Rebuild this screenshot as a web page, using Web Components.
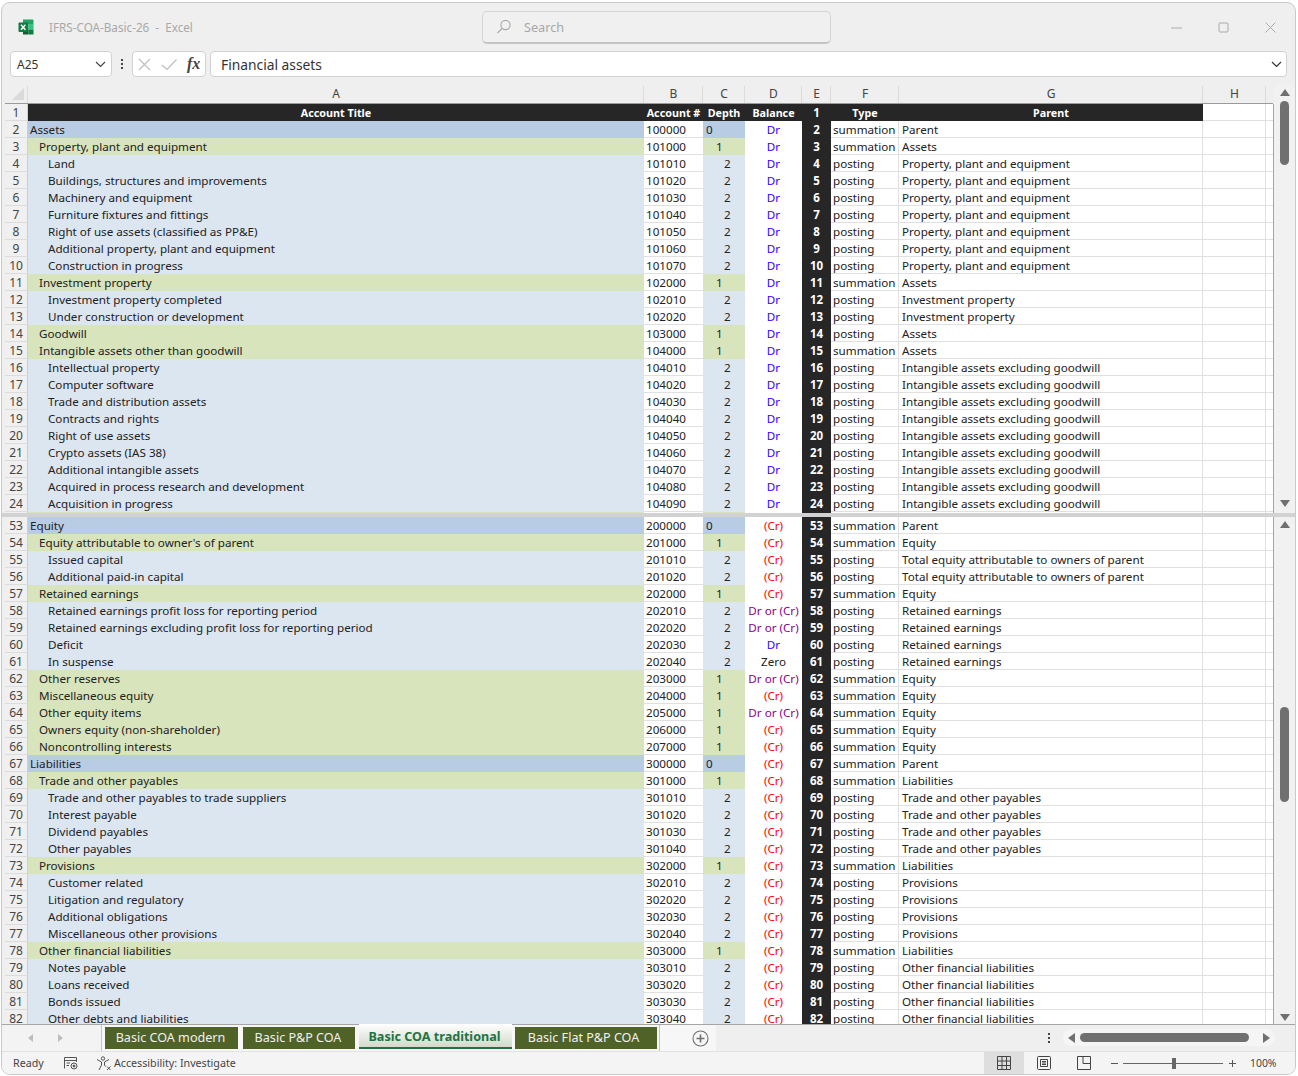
<!DOCTYPE html>
<html>
<head>
<meta charset="utf-8">
<title>IFRS-COA-Basic-26 - Excel</title>
<style>
  html, body { margin: 0; padding: 0; background: #fff; }
  body { font-family: "Noto Sans", "Open Sans", sans-serif; }
</style>
</head>
<body>
<xl-app>
  <xl-titlebar doc="IFRS-COA-Basic-26  -  Excel"></xl-titlebar>
  <xl-formula cell="A25">Financial assets</xl-formula>
  <xl-group pad-top="5" pad-bottom="6" offset="5" size="64">
    <xl-colheads></xl-colheads>
    <xl-pane style="height:409px" from="top"></xl-pane>
  </xl-group>
  <xl-split></xl-split>
  <xl-group pad-top="4" pad-bottom="3" offset="179" size="95">
    <xl-pane style="height:507px" from="bottom"></xl-pane>
  </xl-group>
  <xl-tabs></xl-tabs>
  <xl-status></xl-status>
</xl-app>

<script>
const COLS = '23px 616px 59px 42px 57px 29px 68px 304px 63px 7px';

const PPE = 'Property, plant and equipment';
const IP = 'Investment property';
const IA = 'Intangible assets excluding goodwill';
const TE = 'Total equity attributable to owners of parent';
const RE = 'Retained earnings';
const TP = 'Trade and other payables';
const OFL = 'Other financial liabilities';

// [row, title, account, balance, type, parent]
const topRows = [
  [2, 'Assets', 100000, 'Dr', 's', 'Parent'],
  [3, PPE, 101000, 'Dr', 's', 'Assets'],
  [4, 'Land', 101010, 'Dr', 'p', PPE],
  [5, 'Buildings, structures and improvements', 101020, 'Dr', 'p', PPE],
  [6, 'Machinery and equipment', 101030, 'Dr', 'p', PPE],
  [7, 'Furniture fixtures and fittings', 101040, 'Dr', 'p', PPE],
  [8, 'Right of use assets (classified as PP&E)', 101050, 'Dr', 'p', PPE],
  [9, 'Additional property, plant and equipment', 101060, 'Dr', 'p', PPE],
  [10, 'Construction in progress', 101070, 'Dr', 'p', PPE],
  [11, IP, 102000, 'Dr', 's', 'Assets'],
  [12, 'Investment property completed', 102010, 'Dr', 'p', IP],
  [13, 'Under construction or development', 102020, 'Dr', 'p', IP],
  [14, 'Goodwill', 103000, 'Dr', 'p', 'Assets'],
  [15, 'Intangible assets other than goodwill', 104000, 'Dr', 's', 'Assets'],
  [16, 'Intellectual property', 104010, 'Dr', 'p', IA],
  [17, 'Computer software', 104020, 'Dr', 'p', IA],
  [18, 'Trade and distribution assets', 104030, 'Dr', 'p', IA],
  [19, 'Contracts and rights', 104040, 'Dr', 'p', IA],
  [20, 'Right of use assets', 104050, 'Dr', 'p', IA],
  [21, 'Crypto assets (IAS 38)', 104060, 'Dr', 'p', IA],
  [22, 'Additional intangible assets', 104070, 'Dr', 'p', IA],
  [23, 'Acquired in process research and development', 104080, 'Dr', 'p', IA],
  [24, 'Acquisition in progress', 104090, 'Dr', 'p', IA],
];

const bottomRows = [
  [53, 'Equity', 200000, '(Cr)', 's', 'Parent'],
  [54, "Equity attributable to owner's of parent", 201000, '(Cr)', 's', 'Equity'],
  [55, 'Issued capital', 201010, '(Cr)', 'p', TE],
  [56, 'Additional paid-in capital', 201020, '(Cr)', 'p', TE],
  [57, RE, 202000, '(Cr)', 's', 'Equity'],
  [58, 'Retained earnings profit loss for reporting period', 202010, 'Dr or (Cr)', 'p', RE],
  [59, 'Retained earnings excluding profit loss for reporting period', 202020, 'Dr or (Cr)', 'p', RE],
  [60, 'Deficit', 202030, 'Dr', 'p', RE],
  [61, 'In suspense', 202040, 'Zero', 'p', RE],
  [62, 'Other reserves', 203000, 'Dr or (Cr)', 's', 'Equity'],
  [63, 'Miscellaneous equity', 204000, '(Cr)', 's', 'Equity'],
  [64, 'Other equity items', 205000, 'Dr or (Cr)', 's', 'Equity'],
  [65, 'Owners equity (non-shareholder)', 206000, '(Cr)', 's', 'Equity'],
  [66, 'Noncontrolling interests', 207000, '(Cr)', 's', 'Equity'],
  [67, 'Liabilities', 300000, '(Cr)', 's', 'Parent'],
  [68, TP, 301000, '(Cr)', 's', 'Liabilities'],
  [69, 'Trade and other payables to trade suppliers', 301010, '(Cr)', 'p', TP],
  [70, 'Interest payable', 301020, '(Cr)', 'p', TP],
  [71, 'Dividend payables', 301030, '(Cr)', 'p', TP],
  [72, 'Other payables', 301040, '(Cr)', 'p', TP],
  [73, 'Provisions', 302000, '(Cr)', 's', 'Liabilities'],
  [74, 'Customer related', 302010, '(Cr)', 'p', 'Provisions'],
  [75, 'Litigation and regulatory', 302020, '(Cr)', 'p', 'Provisions'],
  [76, 'Additional obligations', 302030, '(Cr)', 'p', 'Provisions'],
  [77, 'Miscellaneous other provisions', 302040, '(Cr)', 'p', 'Provisions'],
  [78, OFL, 303000, '(Cr)', 's', 'Liabilities'],
  [79, 'Notes payable', 303010, '(Cr)', 'p', OFL],
  [80, 'Loans received', 303020, '(Cr)', 'p', OFL],
  [81, 'Bonds issued', 303030, '(Cr)', 'p', OFL],
  [82, 'Other debts and liabilities', 303040, '(Cr)', 'p', OFL],
];

const levelOf = acct => acct % 100000 === 0 ? 0 : acct % 1000 === 0 ? 1 : 2;
const esc = s => String(s).replace(/&/g, '&amp;').replace(/</g, '&lt;');

class XlApp extends HTMLElement {
  connectedCallback() {
    this.attachShadow({ mode: 'open' });
    this.shadowRoot.innerHTML = `
      <style>
        :host {
          display: block;
          box-sizing: border-box;
          width: 1295px;
          height: 1073px;
          margin: 2px 0 0 1px;
          background: #efefef;
          border: 1px solid #c9c9c9;
          border-radius: 9px;
          overflow: hidden;
        }
        .col { display: flex; flex-direction: column; height: 100%; }
      </style>
      <div class="col"><slot></slot></div>
    `;
  }
}

class XlTitlebar extends HTMLElement {
  connectedCallback() {
    this.attachShadow({ mode: 'open' });
    this.shadowRoot.innerHTML = `
      <style>
        :host {
          display: flex;
          align-items: center;
          height: 48px;
          flex: none;
          padding: 0 0 0 16px;
          font-size: 11.7px;
          color: #a8a8a8;
        }
        .logo { width: 16px; height: 16px; flex: none; }
        .doc { margin-left: 15px; width: 433px; white-space: pre; }
        .search {
          box-sizing: border-box;
          width: 349px;
          height: 33px;
          display: flex;
          align-items: center;
          padding-left: 13px;
          gap: 12px;
          background: #f0f0f0;
          border: 1px solid #d4d4d4;
          border-bottom: 2px solid #c4c4c4;
          border-radius: 5px;
          font-size: 12.7px;
        }
        .btns { margin-left: auto; display: flex; align-items: center; gap: 36px; padding-right: 19px; }
        svg { display: block; }
      </style>
      <svg class="logo" viewBox="0 0 16 16">
        <path d="M5 0.5h9.5a1 1 0 0 1 1 1V5H5z" fill="#21a366"/>
        <rect x="5" y="5" width="5.2" height="5.5" fill="#107c41"/>
        <rect x="10.2" y="5" width="5.3" height="5.5" fill="#33c481"/>
        <rect x="5" y="10.5" width="5.2" height="5" fill="#185c37"/>
        <rect x="10.2" y="10.5" width="5.3" height="5" fill="#107c41"/>
        <rect x="0.5" y="3.5" width="9.5" height="9.5" rx="1" fill="#107c41"/>
        <path d="M3 5.7 L7.4 10.8 M7.4 5.7 L3 10.8" stroke="#fff" stroke-width="1.5"/>
      </svg>
      <span class="doc">${this.getAttribute('doc')}</span>
      <div class="search">
        <svg width="16" height="16" viewBox="0 0 16 16" fill="none" stroke="#a8a8a8" stroke-width="1.1">
          <circle cx="9.5" cy="6" r="4.6"/><path d="M6.2 9.3 L1.5 14"/>
        </svg>
        <span>Search</span>
      </div>
      <div class="btns">
        <svg width="11" height="11" viewBox="0 0 11 11"><path d="M0 6h11" stroke="#aaa"/></svg>
        <svg width="11" height="11" viewBox="0 0 11 11" fill="none"><rect x="1" y="1" width="9" height="9" rx="1" stroke="#aaa"/></svg>
        <svg width="11" height="11" viewBox="0 0 11 11"><path d="M0.5 0.5 L10.5 10.5 M10.5 0.5 L0.5 10.5" stroke="#aaa"/></svg>
      </div>
    `;
  }
}

class XlFormula extends HTMLElement {
  connectedCallback() {
    this.attachShadow({ mode: 'open' });
    this.shadowRoot.innerHTML = `
      <style>
        :host {
          display: flex;
          flex: none;
          height: 26px;
          padding-left: 8px;
          margin-bottom: 7px;
          font-size: 13.8px;
          color: #333;
        }
        .box {
          box-sizing: border-box;
          height: 26px;
          background: #fff;
          border: 1px solid #d2d2d2;
          border-radius: 4px;
          display: flex;
          align-items: center;
        }
        .name { width: 102px; padding: 0 5px 0 6px; justify-content: space-between; font-size: 12px; }
        .dots { width: 20px; display: flex; flex-direction: column; align-items: center; justify-content: center; gap: 2px; }
        .dots i { width: 2px; height: 2px; background: #444; }
        .fx { width: 74px; padding-left: 5px; gap: 10px; }
        .fx em { font: italic bold 16px "Liberation Serif", serif; color: #444; }
        .input { width: 1077px; margin-left: 4px; padding: 0 4px 0 10px; justify-content: space-between; }
        svg { display: block; }
      </style>
      <div class="box name">
        <span>${this.getAttribute('cell')}</span>
        <svg width="11" height="7" viewBox="0 0 11 7" fill="none" stroke="#444" stroke-width="1.2"><path d="M1 1 L5.5 5.5 L10 1"/></svg>
      </div>
      <div class="dots"><i></i><i></i><i></i></div>
      <div class="box fx">
        <svg width="13" height="13" viewBox="0 0 13 13" fill="none" stroke="#bdbdbd" stroke-width="1.1"><path d="M1 1 L12 12 M12 1 L1 12"/></svg>
        <svg width="16" height="13" viewBox="0 0 16 13" fill="none" stroke="#bdbdbd" stroke-width="1.1"><path d="M1 7 L6 11.5 L15.5 1.5"/></svg>
        <em>fx</em>
      </div>
      <div class="box input">
        <span><slot></slot></span>
        <svg width="11" height="7" viewBox="0 0 11 7" fill="none" stroke="#333" stroke-width="1.2"><path d="M1 1 L5.5 5.5 L10 1"/></svg>
      </div>
    `;
  }
}

// a run of sheet content with its vertical scrollbar down the right-hand side
class XlGroup extends HTMLElement {
  connectedCallback() {
    const a = n => this.getAttribute(n);
    this.attachShadow({ mode: 'open' });
    this.shadowRoot.innerHTML = `
      <style>
        :host { display: flex; flex: none; }
        .main { width: 1272px; flex: none; display: flex; flex-direction: column; }
        .bar {
          box-sizing: border-box;
          width: 21px;
          flex: none;
          display: flex;
          flex-direction: column;
          align-items: center;
          background: #f1f1f1;
          padding: ${a('pad-top')}px 0 ${a('pad-bottom')}px;
          border-radius: 8px 8px 0 0;
        }
        svg { display: block; flex: none; }
        .thumb { width: 9px; border-radius: 5px; background: #707070; flex: none; }
        .down { margin-top: auto; }
      </style>
      <div class="main"><slot></slot></div>
      <div class="bar">
        <svg width="10" height="7" viewBox="0 0 10 7"><path d="M5 0 L10 7 H0z" fill="#707070"/></svg>
        <div class="thumb" style="margin-top:${a('offset')}px;height:${a('size')}px"></div>
        <svg class="down" width="10" height="7" viewBox="0 0 10 7"><path d="M5 7 L10 0 H0z" fill="#707070"/></svg>
      </div>
    `;
  }
}

class XlColheads extends HTMLElement {
  connectedCallback() {
    this.attachShadow({ mode: 'open' });
    const letters = ['A', 'B', 'C', 'D', 'E', 'F', 'G', 'H'];
    this.shadowRoot.innerHTML = `
      <style>
        :host {
          display: block;
          flex: none;
          height: 18px;
          margin-top: 2px;
          padding-left: 3px;
          font-size: 12px;
          color: #444;
        }
        .row {
          display: grid;
          grid-template-columns: ${COLS};
          box-sizing: border-box;
          height: 18px;
          width: 1268px;
          border-bottom: 1px solid #9b9b9b;
        }
        .c { text-align: center; line-height: 16px; padding-left: 1px; border-right: 1px solid #dcdcdc; box-sizing: border-box; }
        .corner { border-right: 1px solid #dcdcdc; display: flex; align-items: flex-end; justify-content: flex-end; padding: 0 3px 3px 0; }
        .end { border: 0; }
      </style>
      <div class="row">
        <div class="corner">
          <svg width="12" height="12" viewBox="0 0 12 12"><path d="M12 0 V12 H0z" fill="#dadada"/></svg>
        </div>
        ${letters.map(l => `<div class="c">${l}</div>`).join('')}
        <div class="c end"></div>
      </div>
    `;
  }
}

class XlPane extends HTMLElement {
  connectedCallback() {
    this.attachShadow({ mode: 'open' });
    const top = this.getAttribute('from') === 'top';
    const rows = top ? topRows : bottomRows;

    const dataRow = ([n, title, acct, bal, type, parent]) => {
      const lvl = levelOf(acct);
      const balClass = bal === 'Dr' ? 'dr' : bal === '(Cr)' ? 'cr' : bal === 'Zero' ? '' : 'both';
      return `<div class="row">
        <div class="cell rh">${n}</div>
        <div class="cell a l${lvl}">${esc(title)}</div>
        <div class="cell b">${acct}</div>
        <div class="cell c d${lvl}">${lvl}</div>
        <div class="cell bal ${balClass}">${bal}</div>
        <div class="cell e">${n}</div>
        <div class="cell t">${type === 's' ? 'summation' : 'posting'}</div>
        <div class="cell g">${esc(parent)}</div>
        <div class="cell h"></div>
        <div class="cell i"></div>
      </div>`;
    };

    const headRow = `<div class="row">
        <div class="cell rh">1</div>
        <div class="cell hd">Account Title</div>
        <div class="cell hd">Account #</div>
        <div class="cell hd">Depth</div>
        <div class="cell hd">Balance</div>
        <div class="cell hd num">1</div>
        <div class="cell hd">Type</div>
        <div class="cell hd">Parent</div>
        <div class="cell h"></div>
        <div class="cell i"></div>
      </div>`;

    // top edge of the next row, peeking out above the split bar
    const sliver = `<div class="row sliver">
        <div class="cell rh"></div><div class="cell a l1"></div><div class="cell b"></div>
        <div class="cell c d1"></div><div class="cell bal"></div><div class="cell e"></div>
        <div class="cell t"></div><div class="cell g"></div><div class="cell h"></div><div class="cell i"></div>
      </div>`;

    this.shadowRoot.innerHTML = `
      <style>
        :host {
          display: block;
          flex: none;
          padding-left: 3px;
          background: #efefef;
          font-size: 11.65px;
          color: #222;
          overflow: hidden;
        }
        .sheet {
          width: 1269px;
          box-sizing: border-box;
          border-right: 1px solid #a6a6a6;
        }
        .row { display: grid; grid-template-columns: ${COLS}; height: 17px; }
        .row.sliver { height: 1px; overflow: hidden; }
        .cell {
          box-sizing: border-box;
          height: 17px;
          line-height: 18px;
          white-space: nowrap;
          overflow: hidden;
        }
        .rh {
          background: #f0f0f0;
          text-align: center;
          color: #444;
          font-size: 12px;
          border-bottom: 1px solid #dcdcdc;
          border-right: 1px solid #cfcfcf;
        }
        .a.l0 { background: #b8cce4; padding-left: 2px; }
        .a.l1 { background: #d8e4bc; padding-left: 11px; }
        .a.l2 { background: #dce6f1; padding-left: 20px; }
        .b, .t, .g, .h, .i { background: #fff; border-bottom: 1px solid #e0e0e0; }
        .b { padding-left: 2px; }
        .c { text-align: left; }
        .d0 { background: #b8cce4; padding-left: 3px; }
        .d1 { background: #d8e4bc; padding-left: 13px; }
        .d2 { background: #dce6f1; padding-left: 21px; }
        .bal { background: #fff; text-align: center; }
        .dr { color: #3300ff; }
        .cr { color: #ff0000; }
        .both { color: #8b008b; }
        .e { background: #262626; color: #fff; font-weight: 700; text-align: center; font-size: 11.5px; }
        .hd { background: #262626; color: #fff; font-weight: 700; text-align: center; font-size: 10.75px; }
        .hd.num { font-size: 11.5px; }
        .t { padding-left: 2px; border-right: 1px solid #e0e0e0; }
        .g { padding-left: 3px; border-right: 1px solid #e0e0e0; }
        .h { border-right: 1px solid #e0e0e0; }
      </style>
      <div class="sheet">
        ${top ? headRow : ''}
        ${rows.map(dataRow).join('')}
        ${top ? sliver : ''}
      </div>
    `;
  }
}

class XlSplit extends HTMLElement {
  connectedCallback() {
    this.attachShadow({ mode: 'open' });
    this.shadowRoot.innerHTML = `
      <style>
        :host { display: block; flex: none; height: 4px; background: #d2d2d2; }
      </style>
    `;
  }
}

class XlTabs extends HTMLElement {
  connectedCallback() {
    this.attachShadow({ mode: 'open' });
    const tab = (label, w, cls) => `<div class="tab ${cls || ''}" style="width:${w}px">${esc(label)}</div>`;
    this.shadowRoot.innerHTML = `
      <style>
        :host {
          display: flex;
          align-items: stretch;
          flex: none;
          height: 27px;
          background: #efefef;
          border-top: 1px solid #a6a6a6;
          box-sizing: border-box;
          font-size: 12.6px;
        }
        .left {
          display: flex;
          align-items: center;
          width: 714px;
          box-sizing: border-box;
          background: #f7f7f7;
        }
        .nav { display: flex; align-items: center; gap: 25px; width: 100px; box-sizing: border-box; padding-left: 26px; height: 100%; background: #f3f3f3; border-right: 1px solid #c4c4c4; }
        .tabs { display: flex; align-items: stretch; height: 22px; margin-left: 3px; gap: 4px; }
        .tab {
          box-sizing: border-box;
          background: #4f6228;
          color: #f0f0f0;
          text-align: center;
          line-height: 22px;
          white-space: nowrap;
          padding-right: 2px;
        }
        .tab.second { margin-left: 1px; }
        .tab.last { padding-right: 5px; }
        .tab.on {
          background: linear-gradient(#ffffff, #d3d9c9);
          color: #217346;
          font-weight: 700;
          border-bottom: 2px solid #217346;
          margin: -3px -1px 0 0;
          padding-top: 3px;
          line-height: 20px;
        }
        .after { width: 1px; height: 100%; background: #c4c4c4; margin-left: 2px; }
        .plus { margin-left: 32px; display: block; }
        .dots { display: flex; flex-direction: column; gap: 2px; margin-left: 332px; justify-content: center; }
        .dots i { width: 2px; height: 2px; background: #444; }
        .hs {
          display: flex;
          align-items: center;
          width: 212px;
          height: 17px;
          margin: 4px 0 0 13px;
          padding-left: 5px;
          box-sizing: border-box;
          border-radius: 9px;
          background: #f5f5f5;
        }
        .hs .thumb { width: 169px; height: 9px; border-radius: 5px; background: #707070; margin: 0 14px 0 5px; flex: none; }
        svg { flex: none; }
      </style>
      <div class="left">
        <div class="nav">
          <svg width="5" height="8" viewBox="0 0 5 8"><path d="M5 0 V8 L0 4z" fill="#bdbdbd"/></svg>
          <svg width="5" height="8" viewBox="0 0 5 8"><path d="M0 0 V8 L5 4z" fill="#bdbdbd"/></svg>
        </div>
        <div class="tabs">
          ${tab('Basic COA modern', 133)}
          ${tab('Basic P&P COA', 112, 'second')}
          ${tab('Basic COA traditional', 153, 'on')}
          ${tab('Basic Flat P&P COA', 142, 'last')}
        </div>
        <div class="after"></div>
        <svg class="plus" width="17" height="17" viewBox="0 0 17 17" fill="none" stroke="#707070">
          <circle cx="8.5" cy="8.5" r="7.5" stroke-width="1.1"/><path d="M8.5 4.5 V12.5 M4.5 8.5 H12.5" stroke-width="1.6"/>
        </svg>
      </div>
      <div class="dots"><i></i><i></i><i></i></div>
      <div class="hs">
        <svg width="7" height="10" viewBox="0 0 7 10"><path d="M0 5 L7 0 V10z" fill="#707070"/></svg>
        <div class="thumb"></div>
        <svg width="7" height="10" viewBox="0 0 7 10"><path d="M7 5 L0 0 V10z" fill="#707070"/></svg>
      </div>
    `;
  }
}

class XlStatus extends HTMLElement {
  connectedCallback() {
    this.attachShadow({ mode: 'open' });
    this.shadowRoot.innerHTML = `
      <style>
        :host {
          display: flex;
          align-items: center;
          flex: 1;
          min-height: 0;
          background: #f4f4f4;
          border-top: 1px solid #e2e2e2;
          padding-left: 11px;
          font-size: 10.7px;
          color: #444;
        }
        svg { display: block; flex: none; }
        .ready { width: 31px; }
        .macro { margin-left: 19px; }
        .acc { margin-left: 18px; margin-right: 3px; }
        .text { width: 123px; white-space: nowrap; }
        .views { display: flex; height: 100%; margin-left: 747px; }
        .view { width: 40px; display: flex; align-items: center; justify-content: center; }
        .view.on { background: #dedede; }
        .minus { margin-left: 6px; }
        .slider { width: 100px; height: 1px; background: #666; margin-left: 4px; position: relative; }
        .slider i { position: absolute; left: 49px; top: -5px; width: 4px; height: 11px; background: #666; }
        .plus { margin-left: 5px; }
        .pct { margin-left: 13px; font-size: 10.4px; }
      </style>
      <span class="ready">Ready</span>
      <svg class="macro" width="15" height="14" viewBox="0 0 15 14" fill="none" stroke="#555">
        <path d="M1.5 12.5 V1.5 H13.5 V6 M1.5 4.5 H13.5 M3.5 7 H7 M3.5 9.5 H6"/>
        <circle cx="11" cy="10" r="3"/><circle cx="11" cy="10" r="1" fill="#555"/>
      </svg>
      <svg class="acc" width="15" height="15" viewBox="0 0 15 15" fill="none" stroke="#555">
        <circle cx="7" cy="2.5" r="1.7"/>
        <path d="M1 3.5 L5.5 6 V9 L3 14 M13 3.5 L8.5 6 V9 L9.5 10.5 M11 10.5 L14.5 14 M14.5 10.5 L11 14"/>
      </svg>
      <span class="text">Accessibility: Investigate</span>
      <div class="views">
        <div class="view on">
          <svg width="14" height="14" viewBox="0 0 14 14" fill="none" stroke="#444"><path d="M0.5 0.5 H13.5 V13.5 H0.5z M0.5 5 H13.5 M0.5 9.5 H13.5 M5 0.5 V13.5 M9.5 0.5 V13.5"/></svg>
        </div>
        <div class="view">
          <svg width="14" height="14" viewBox="0 0 14 14" fill="none" stroke="#444"><rect x="0.5" y="0.5" width="13" height="13" rx="1"/><path d="M3.5 3.5 H10.5 V10.5 H3.5z M5 5.5 H9 M5 7 H9 M5 8.5 H9"/></svg>
        </div>
        <div class="view">
          <svg width="14" height="14" viewBox="0 0 14 14" fill="none" stroke="#444"><path d="M0.5 0.5 H13.5 V13.5 H0.5z M6 0.5 V7.5 H13.5"/></svg>
        </div>
      </div>
      <svg class="minus" width="9" height="9" viewBox="0 0 9 9"><path d="M1 4.5 H8" stroke="#555"/></svg>
      <div class="slider"><i></i></div>
      <svg class="plus" width="9" height="9" viewBox="0 0 9 9"><path d="M1 4.5 H8 M4.5 1 V8" stroke="#555"/></svg>
      <span class="pct">100%</span>
    `;
  }
}

customElements.define('xl-app', XlApp);
customElements.define('xl-titlebar', XlTitlebar);
customElements.define('xl-formula', XlFormula);
customElements.define('xl-group', XlGroup);
customElements.define('xl-colheads', XlColheads);
customElements.define('xl-pane', XlPane);
customElements.define('xl-split', XlSplit);
customElements.define('xl-tabs', XlTabs);
customElements.define('xl-status', XlStatus);
</script>
</body>
</html>
